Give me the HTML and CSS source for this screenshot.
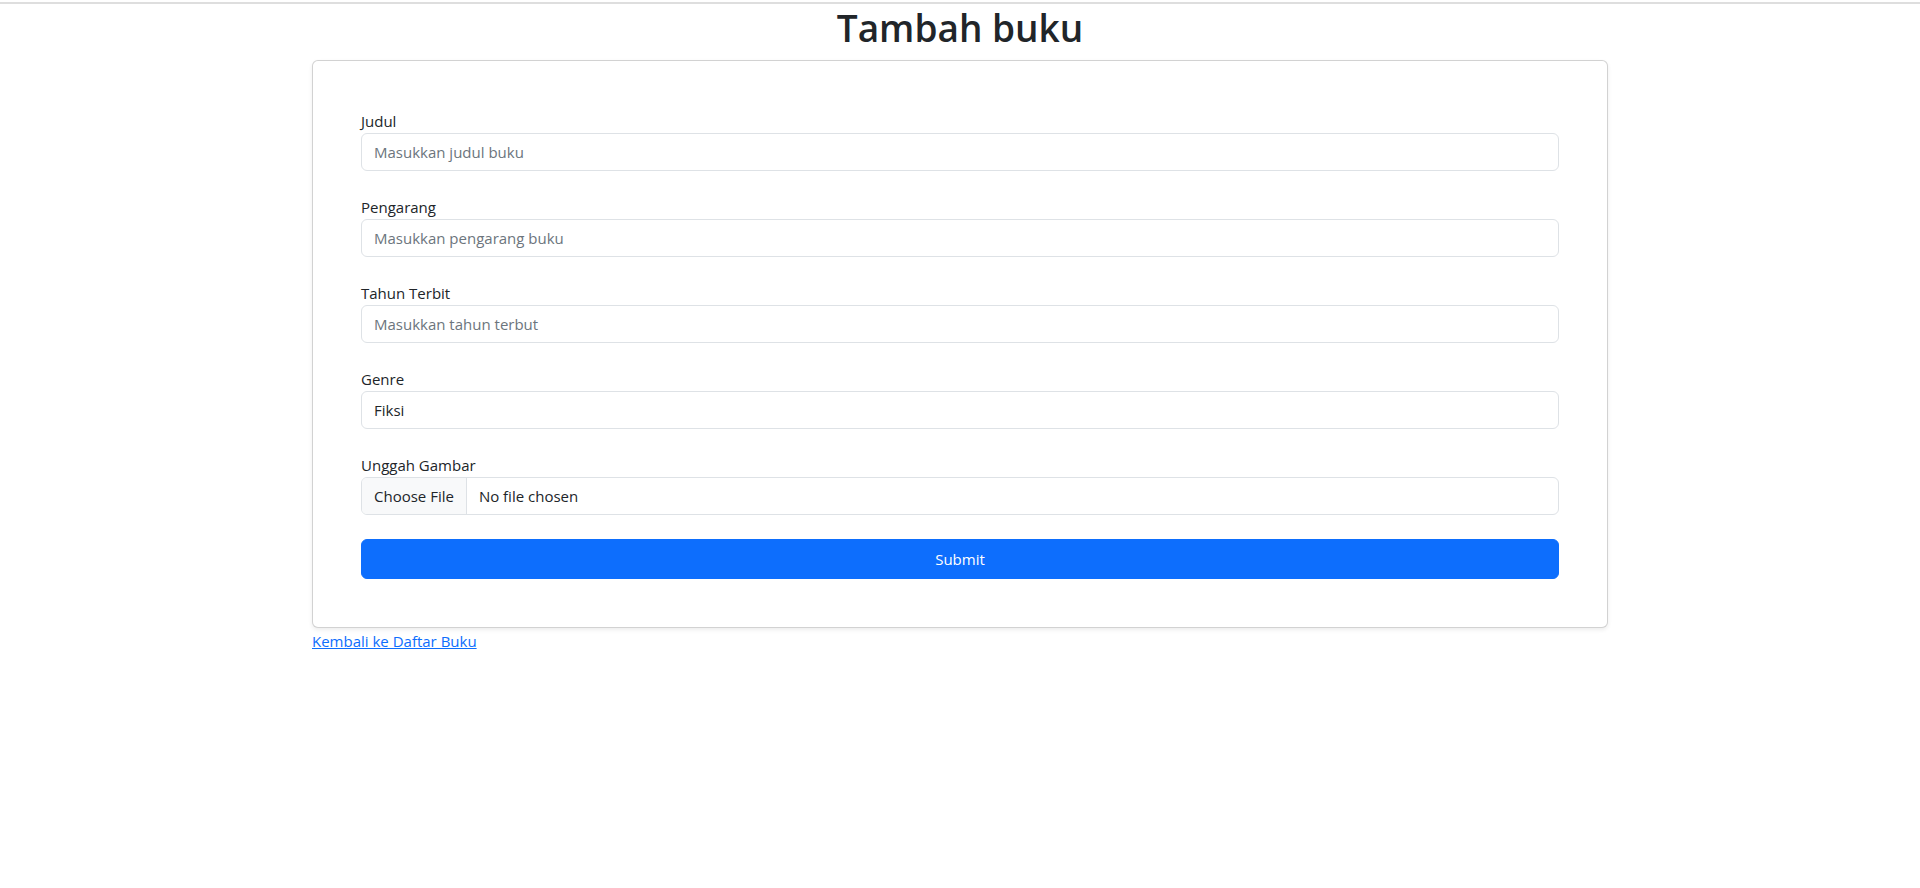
FILE: index.html
```html
<!DOCTYPE html>
<html lang="id">
<head>
<meta charset="utf-8">
<title>Tambah buku</title>
<link rel="stylesheet" href="styles.css">
</head>
<body>
<div class="topline"></div>
<div class="container">
  <h1 class="title">Tambah buku</h1>
  <div class="card">
    <form class="form">
      <div class="group">
        <label class="label" for="judul">Judul</label>
        <input class="control" id="judul" type="text" placeholder="Masukkan judul buku">
      </div>
      <div class="group">
        <label class="label" for="pengarang">Pengarang</label>
        <input class="control" id="pengarang" type="text" placeholder="Masukkan pengarang buku">
      </div>
      <div class="group">
        <label class="label" for="tahun">Tahun Terbit</label>
        <input class="control" id="tahun" type="text" placeholder="Masukkan tahun terbut">
      </div>
      <div class="group">
        <label class="label" for="genre">Genre</label>
        <select class="control select" id="genre">
          <option>Fiksi</option>
          <option>Non-Fiksi</option>
        </select>
      </div>
      <div class="group">
        <label class="label" for="gambar">Unggah Gambar</label>
        <div class="file control" id="gambar">
          <span class="file-btn">Choose File</span>
          <span class="file-name">No file chosen</span>
        </div>
      </div>
      <button class="submit" type="button">Submit</button>
    </form>
  </div>
  <a class="back" href="#">Kembali ke Daftar Buku</a>
</div>
</body>
</html>
```
FILE: styles.css
```css
* { box-sizing: border-box; }

html, body {
  margin: 0;
  padding: 0;
  background: #ffffff;
}

body {
  font-family: "Open Sans", "Noto Sans", sans-serif;
  font-size: 15px;
  line-height: 1.5;
  color: #212529;
}

.topline {
  height: 2px;
  margin-top: 2px;
  background: #dedede;
}

.container {
  max-width: 1320px;
  margin: 0 auto;
  padding: 0 12px;
}

.title {
  margin: 0 0 8px;
  font-size: 37px;
  font-weight: 600;
  line-height: 48px;
  text-align: center;
  color: #212529;
}

.card {
  border: 1px solid rgba(0, 0, 0, 0.175);
  border-radius: 6px;
  box-shadow: 0 2px 4px rgba(0, 0, 0, 0.075);
  padding: 48px;
  background: #fff;
}

.form {
  display: flex;
  flex-direction: column;
}

.group {
  display: flex;
  flex-direction: column;
  margin-bottom: 24px;
}

.label {
  font-size: 15px;
  line-height: 24px;
}

.control {
  display: block;
  width: 100%;
  height: 38px;
  padding: 6px 12px;
  font: inherit;
  font-size: 15px;
  line-height: 24px;
  color: #212529;
  background: #fff;
  border: 1px solid #dee2e6;
  border-radius: 6px;
  outline: none;
}

.control::placeholder {
  color: #6c757d;
  opacity: 1;
}

.select {
  appearance: none;
  -webkit-appearance: none;
}

.file {
  display: flex;
  padding: 0;
  overflow: hidden;
}

.file-btn {
  padding: 6px 12px;
  background: #f8f9fa;
  border-right: 1px solid #dee2e6;
}

.file-name {
  padding: 6px 12px;
}

.submit {
  display: block;
  width: 100%;
  height: 40px;
  padding: 6px 12px;
  font: inherit;
  font-size: 15px;
  color: #fff;
  background: #0d6efd;
  border: 1px solid #0d6efd;
  border-radius: 6px;
}

.back {
  display: inline-block;
  margin-top: 3px;
  font-size: 15px;
  line-height: 21px;
  color: #0d6efd;
  text-decoration: underline;
}
```
